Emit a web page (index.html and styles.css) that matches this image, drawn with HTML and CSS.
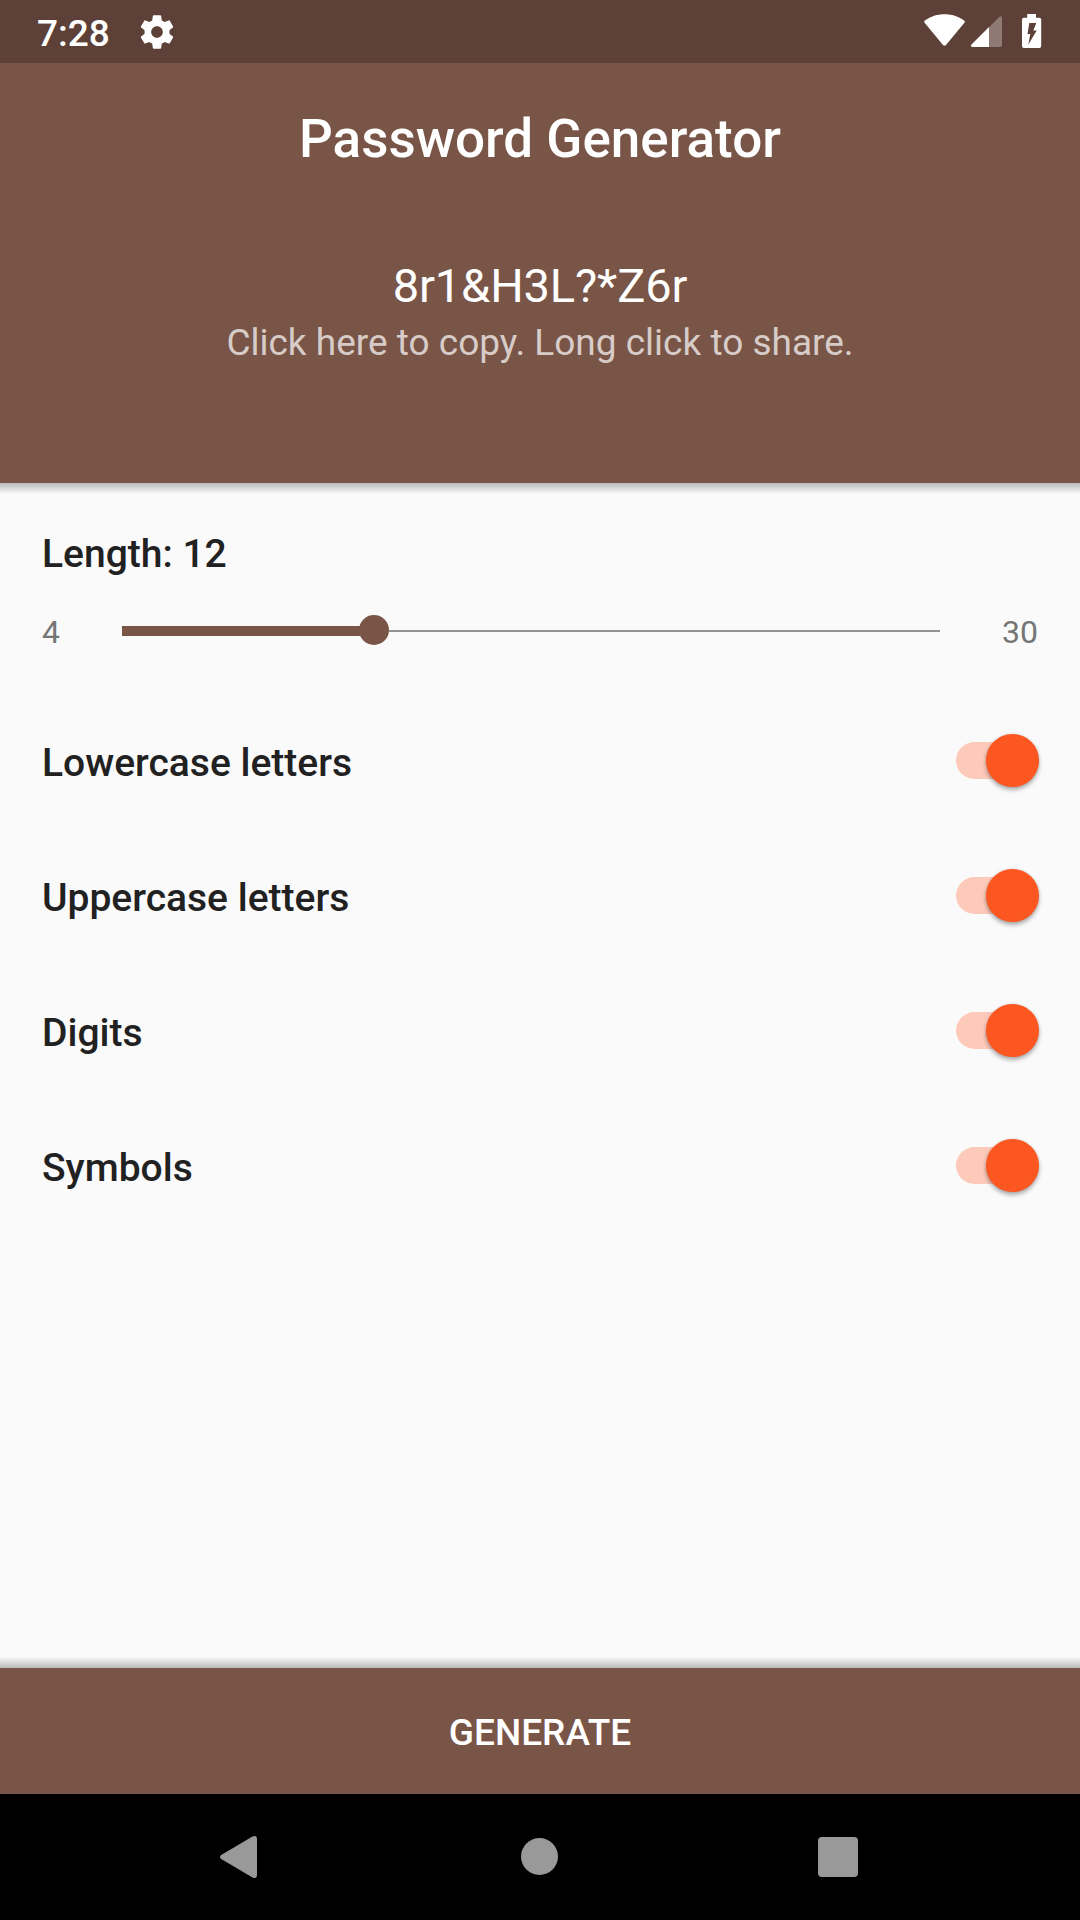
FILE: index.html
```html
<!DOCTYPE html>
<html lang="en">
<head>
<meta charset="utf-8">
<title>Password Generator</title>
<link rel="stylesheet" href="styles.css">
</head>
<body>
<div class="screen">
  <div class="status-bar">
    <span class="time">7:28</span>
    <svg class="gear" width="40" height="40" viewBox="0 0 24 24"><path fill="#fff" d="M19.43 12.98c.04-.32.07-.64.07-.98s-.03-.66-.07-.98l2.11-1.65c.19-.15.24-.42.12-.64l-2-3.46c-.12-.22-.39-.3-.61-.22l-2.49 1c-.52-.4-1.08-.73-1.69-.98l-.38-2.65C14.46 2.18 14.25 2 14 2h-4c-.25 0-.46.18-.49.42l-.38 2.65c-.61.25-1.17.59-1.69.98l-2.49-1c-.23-.09-.49 0-.61.22l-2 3.46c-.13.22-.07.49.12.64l2.11 1.65c-.04.32-.07.65-.07.98s.03.66.07.98l-2.11 1.65c-.19.15-.24.42-.12.64l2 3.46c.12.22.39.3.61.22l2.49-1c.52.4 1.08.73 1.69.98l.38 2.65c.03.24.24.42.49.42h4c.25 0 .46-.18.49-.42l.38-2.65c.61-.25 1.17-.59 1.69-.98l2.49 1c.23.09.49 0 .61-.22l2-3.46c.12-.22.07-.49-.12-.64l-2.11-1.65zM12 15.5c-1.93 0-3.5-1.57-3.5-3.5s1.57-3.5 3.5-3.5 3.5 1.57 3.5 3.5-1.57 3.5-3.5 3.5z"/></svg>
    <svg class="system-icons" width="118" height="34" viewBox="0 0 118 34">
      <path fill="#fff" d="M.6 8.8Q-.3 7.6.9 6.6C7 2.2 13 .2 20.500 .2S34 2.200 40.100 6.600Q41.300 7.600 40.400 8.800L22 31Q20.500 32.600 19 31Z"/>
      <path fill="#fff" fill-opacity=".3" d="M65 13.300L75.200 2.900Q77.200 1.300 78 3.500V31.200Q78 33 76.300 33H65Z"/>
      <path fill="#fff" d="M65 13V33H48.500Q46 32.500 47.500 30.500Z"/>
      <path fill="#fff" fill-rule="evenodd" d="M103.200 0H112V3.700H115.300Q117.200 3.700 117.200 5.600V32Q117.200 33.900 115.300 33.900H99.900Q98 33.900 98 32V5.600Q98 3.700 99.900 3.700H103.200ZM105.300 9L103.500 20H106.300L104.300 30.700L112.700 16.600H109.300L112.300 9Z"/>
    </svg>
  </div>

  <header class="header">
    <h1 class="title">Password Generator</h1>
    <div class="password">8r1&amp;H3L?*Z6r</div>
    <div class="hint">Click here to copy. Long click to share.</div>
  </header>

  <main class="content">
    <div class="label">Length: 12</div>
    <div class="range">
      <span class="bound">4</span>
      <div class="slider"><div class="fill"></div><div class="knob"></div><div class="rest"></div></div>
      <span class="bound">30</span>
    </div>
    <div class="options">
      <div class="option"><span class="label">Lowercase letters</span><span class="switch"><span class="thumb"></span></span></div>
      <div class="option"><span class="label">Uppercase letters</span><span class="switch"><span class="thumb"></span></span></div>
      <div class="option"><span class="label">Digits</span><span class="switch"><span class="thumb"></span></span></div>
      <div class="option"><span class="label">Symbols</span><span class="switch"><span class="thumb"></span></span></div>
    </div>
  </main>

  <button class="generate">GENERATE</button>

  <nav class="nav-bar">
    <svg width="37" height="42" viewBox="0 0 37 42"><path fill="#999" d="M32.500 .600Q36.800-1.200 37 3V39Q36.800 43.200 32.500 41.400L1.200 23.100Q-1.200 21 1.200 18.900Z"/></svg>
    <span class="home"></span>
    <span class="recents"></span>
  </nav>
</div>
</body>
</html>
```

FILE: styles.css
```css
* { box-sizing: border-box; }
body { margin: 0; font-family: Roboto, sans-serif; }

.screen {
  display: flex;
  flex-direction: column;
  width: 1080px;
  height: 1920px;
  background: #fafafa;
  overflow: hidden;
}

.status-bar {
  display: flex;
  align-items: flex-start;
  height: 63px;
  padding: 0 38px 0 37px;
  background: #5d4037;
}
.time {
  width: 72px;
  margin-right: 28px;
  padding-top: 12px;
  color: #fff;
  font-size: 37px;
  font-weight: 500;
  line-height: 44px;
}
.gear { margin-top: 11.5px; }
.system-icons { margin: 14px 0 0 auto; }

.header {
  height: 420px;
  padding-top: 45px;
  background: #795547;
  color: #fff;
  text-align: center;
}
.title {
  margin: 0 0 88px;
  font-size: 53px;
  font-weight: 500;
  line-height: 62px;
}
.password {
  margin-bottom: 7px;
  font-size: 47px;
  letter-spacing: -.15px;
  line-height: 56px;
}
.hint {
  color: #d7ccc8;
  font-size: 37px;
  line-height: 44px;
}

.content {
  flex: 1;
  padding: 47px 42px 0;
  background:
    linear-gradient(#bababa, #fafafa) top / 100% 11px no-repeat,
    linear-gradient(#fafafa, #bababa) bottom / 100% 11px no-repeat,
    #fafafa;
}
.label {
  color: #212121;
  font-size: 39px;
  font-weight: 500;
  line-height: 48px;
}
.range {
  display: flex;
  align-items: center;
  justify-content: space-between;
  height: 38px;
  margin-top: 36px;
}
.bound {
  width: 80px;
  margin-bottom: 2px;
  color: #757575;
  font-size: 32px;
  line-height: 38px;
}
.bound:last-child { text-align: right; width: 98px; }
.slider {
  display: flex;
  align-items: center;
  flex: 1;
  height: 30px;
  margin-bottom: 6px;
}
.fill {
  width: 240px;
  height: 10px;
  margin: 2px -3px 0 0;
  background: #795547;
}
.knob {
  width: 30px;
  height: 30px;
  border-radius: 50%;
  background: #795547;
}
.rest {
  flex: 1;
  height: 2px;
  margin-top: 2px;
  background: #929292;
}

.options { margin-top: 43px; }
.option {
  display: flex;
  align-items: center;
  justify-content: space-between;
  height: 135px;
}
.switch {
  display: flex;
  align-items: center;
  justify-content: flex-end;
  width: 71px;
  height: 37px;
  margin: 0 11px 4px 0;
  border-radius: 18.5px;
  background: #fdc9b9;
}
.thumb {
  flex: none;
  width: 52.5px;
  height: 52.5px;
  margin-right: -11.5px;
  border-radius: 50%;
  background: #fc5621;
  box-shadow: 0 3px 4px rgba(0, 0, 0, .3), 0 0 3px rgba(0, 0, 0, .12);
}

.generate {
  height: 126px;
  padding: 4px 0 0;
  border: 0;
  background: #795547;
  color: #fff;
  font: 500 37px/44px Roboto, sans-serif;
}

.nav-bar {
  display: flex;
  align-items: center;
  justify-content: space-between;
  height: 126px;
  padding: 0 222px 0 220px;
  background: #000;
}
.home {
  width: 37px;
  height: 37px;
  margin: 0 0 1px 3px;
  border-radius: 50%;
  background: #999;
}
.recents {
  width: 40px;
  height: 40px;
  border-radius: 4px;
  background: #999;
}
```
